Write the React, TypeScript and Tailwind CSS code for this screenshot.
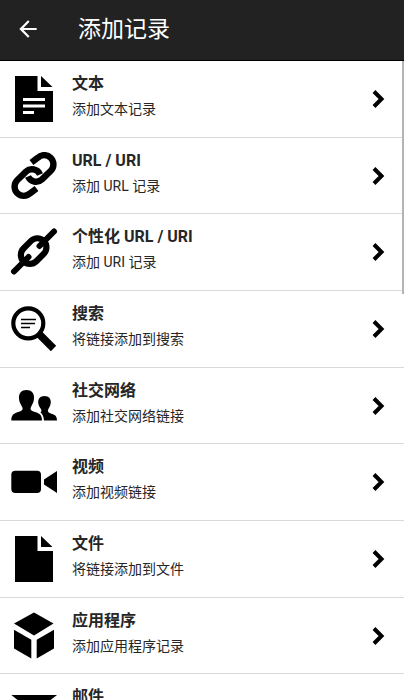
import type { ReactNode } from "react";
import { MdArrowBack } from "react-icons/md";

const page = "M5 1h22.5v15H43v31H5z M31 1v11h11.5z";

const icons: Record<string, ReactNode> = {
  text: (
    <>
      <path d={page} />
      <path d="M13 24.5h22 M13 31h22 M13 37.5h11" stroke="#fff" strokeWidth="3" />
    </>
  ),
  link: (
    <g fill="none" stroke="currentColor" strokeWidth="6.4">
      <path d="M21.5 10.5L27.6 5.9A9.2 9.2 0 0 1 40.8 18.8L32 27.4A8.8 8.8 0 0 1 18 24.5" />
      <path d="M26.5 36.5L20.4 41.1A9.2 9.2 0 0 1 7.2 28.2L16 19.6A8.8 8.8 0 0 1 30 22.5" />
    </g>
  ),
  customLink: (
    <g fill="none" stroke="currentColor" strokeLinecap="round">
      <path d="M21 12.9A9 9 0 0 1 33.8 25.7L26.3 33.3A9 9 0 0 1 13.5 20.5z" strokeWidth="6.2" />
      <path d="M4 43.5L18.5 29 M44 3.5L29.5 18" strokeWidth="6" />
    </g>
  ),
  search: (
    <g fill="none" stroke="currentColor">
      <circle cx="18.3" cy="18.3" r="15" strokeWidth="4.2" />
      <path d="M28 28L43.5 43.5" strokeWidth="7.5" />
      <path d="M11 14.5h15 M11 18.5h14 M11 22.5h9" strokeWidth="1.7" />
    </g>
  ),
  social: (
    <>
      <path d="M16.5 8C21.5 8 24.4 11.4 24 16.5C23.7 21 22 22.5 20.8 25.5C20 28 21.5 29 25 30C30 31.3 32 33.5 32 38.5H1.3C1.3 33.5 3.3 31.3 8.3 30C11.8 29 13.2 28 12.4 25.5C11.2 22.5 9.3 21 9 16.5C8.6 11.4 11.5 8 16.5 8z" />
      <path d="M34.5 14C38.7 14 41 16.8 40.8 20.6C40.6 24.3 38.9 25.5 38 28C37.4 30 38.8 31 41.5 31.7C45.4 32.8 47 34.5 47 38.5H34C33.7 34.5 32.5 32 30.4 30.3C31.6 29.6 31.6 28.8 31.3 28C30.4 25.5 28.4 24.3 28.2 20.6C28 16.8 30.3 14 34.5 14z" />
    </>
  ),
  video: (
    <>
      <rect x="1.3" y="12.7" width="29.7" height="22.3" rx="4" />
      <path d="M47 13L34 21.5v5L47 35z" />
    </>
  ),
  file: <path d={page} />,
  app: (
    <>
      <path d="M24 0.5L43.5 11.5L24 23.5L4 11.5z" />
      <path d="M4 17.7L21.3 27.7V46.5L4 36.5z" />
      <path d="M44 17.7L26.7 27.7V46.5L44 36.5z" />
    </>
  ),
  mail: (
    <>
      <path d="M1.3 7H47L24 25z" />
      <path d="M1.3 12L24 29.5L47 12V41H1.3z" />
    </>
  )
};

const records = [
  { icon: "text", title: "文本", description: "添加文本记录" },
  { icon: "link", title: "URL / URI", description: "添加 URL 记录" },
  { icon: "customLink", title: "个性化 URL / URI", description: "添加 URI 记录" },
  { icon: "search", title: "搜索", description: "将链接添加到搜索" },
  { icon: "social", title: "社交网络", description: "添加社交网络链接" },
  { icon: "video", title: "视频", description: "添加视频链接" },
  { icon: "file", title: "文件", description: "将链接添加到文件" },
  { icon: "app", title: "应用程序", description: "添加应用程序记录" },
  { icon: "mail", title: "邮件", description: "添加邮件记录" }
];

const App = () => {
  return (
    <div className="flex h-screen flex-col overflow-hidden bg-white font-[Roboto,'Noto_Sans_CJK_SC',sans-serif] text-[#262626]">
      <header className="flex h-[61px] shrink-0 items-center border-b border-black bg-[#222] pl-[15px] text-white">
        <button type="button" aria-label="返回" className="pb-[2px]">
          <MdArrowBack className="size-[26px]" />
        </button>
        <h1 className="pl-[37px] text-[23px] leading-8">添加记录</h1>
      </header>

      <main className="relative min-h-0 flex-1">
        <ul className="h-full overflow-y-auto [scrollbar-width:none]">
          {records.map((record) => (
            <li key={record.title} className="h-[77px] border-b border-[#d9d9d9] nth-[3n+2]:h-[76px]">
              <a href="#" className="flex h-full items-center pl-[10px] pr-[14px]">
                <svg viewBox="0 0 48 48" className="size-12 shrink-0 text-black" fill="currentColor" aria-hidden="true">
                  {icons[record.icon]}
                </svg>
                <div className="min-w-0 flex-1 pb-[6px] pl-[14px]">
                  <h2 className="text-base leading-[26px] font-bold">{record.title}</h2>
                  <p className="text-sm leading-6">{record.description}</p>
                </div>
                <svg viewBox="0 0 24 24" className="size-6 shrink-0 text-black" fill="none" stroke="currentColor" strokeWidth="4" aria-hidden="true">
                  <path d="M8 4.5L15.5 12L8 19.5" />
                </svg>
              </a>
            </li>
          ))}
        </ul>
        {/* scroll position indicator */}
        <div className="absolute top-0 right-0 h-[233px] w-[2px] bg-[#b4b4b4]" />
      </main>
    </div>
  );
};

export default App;
